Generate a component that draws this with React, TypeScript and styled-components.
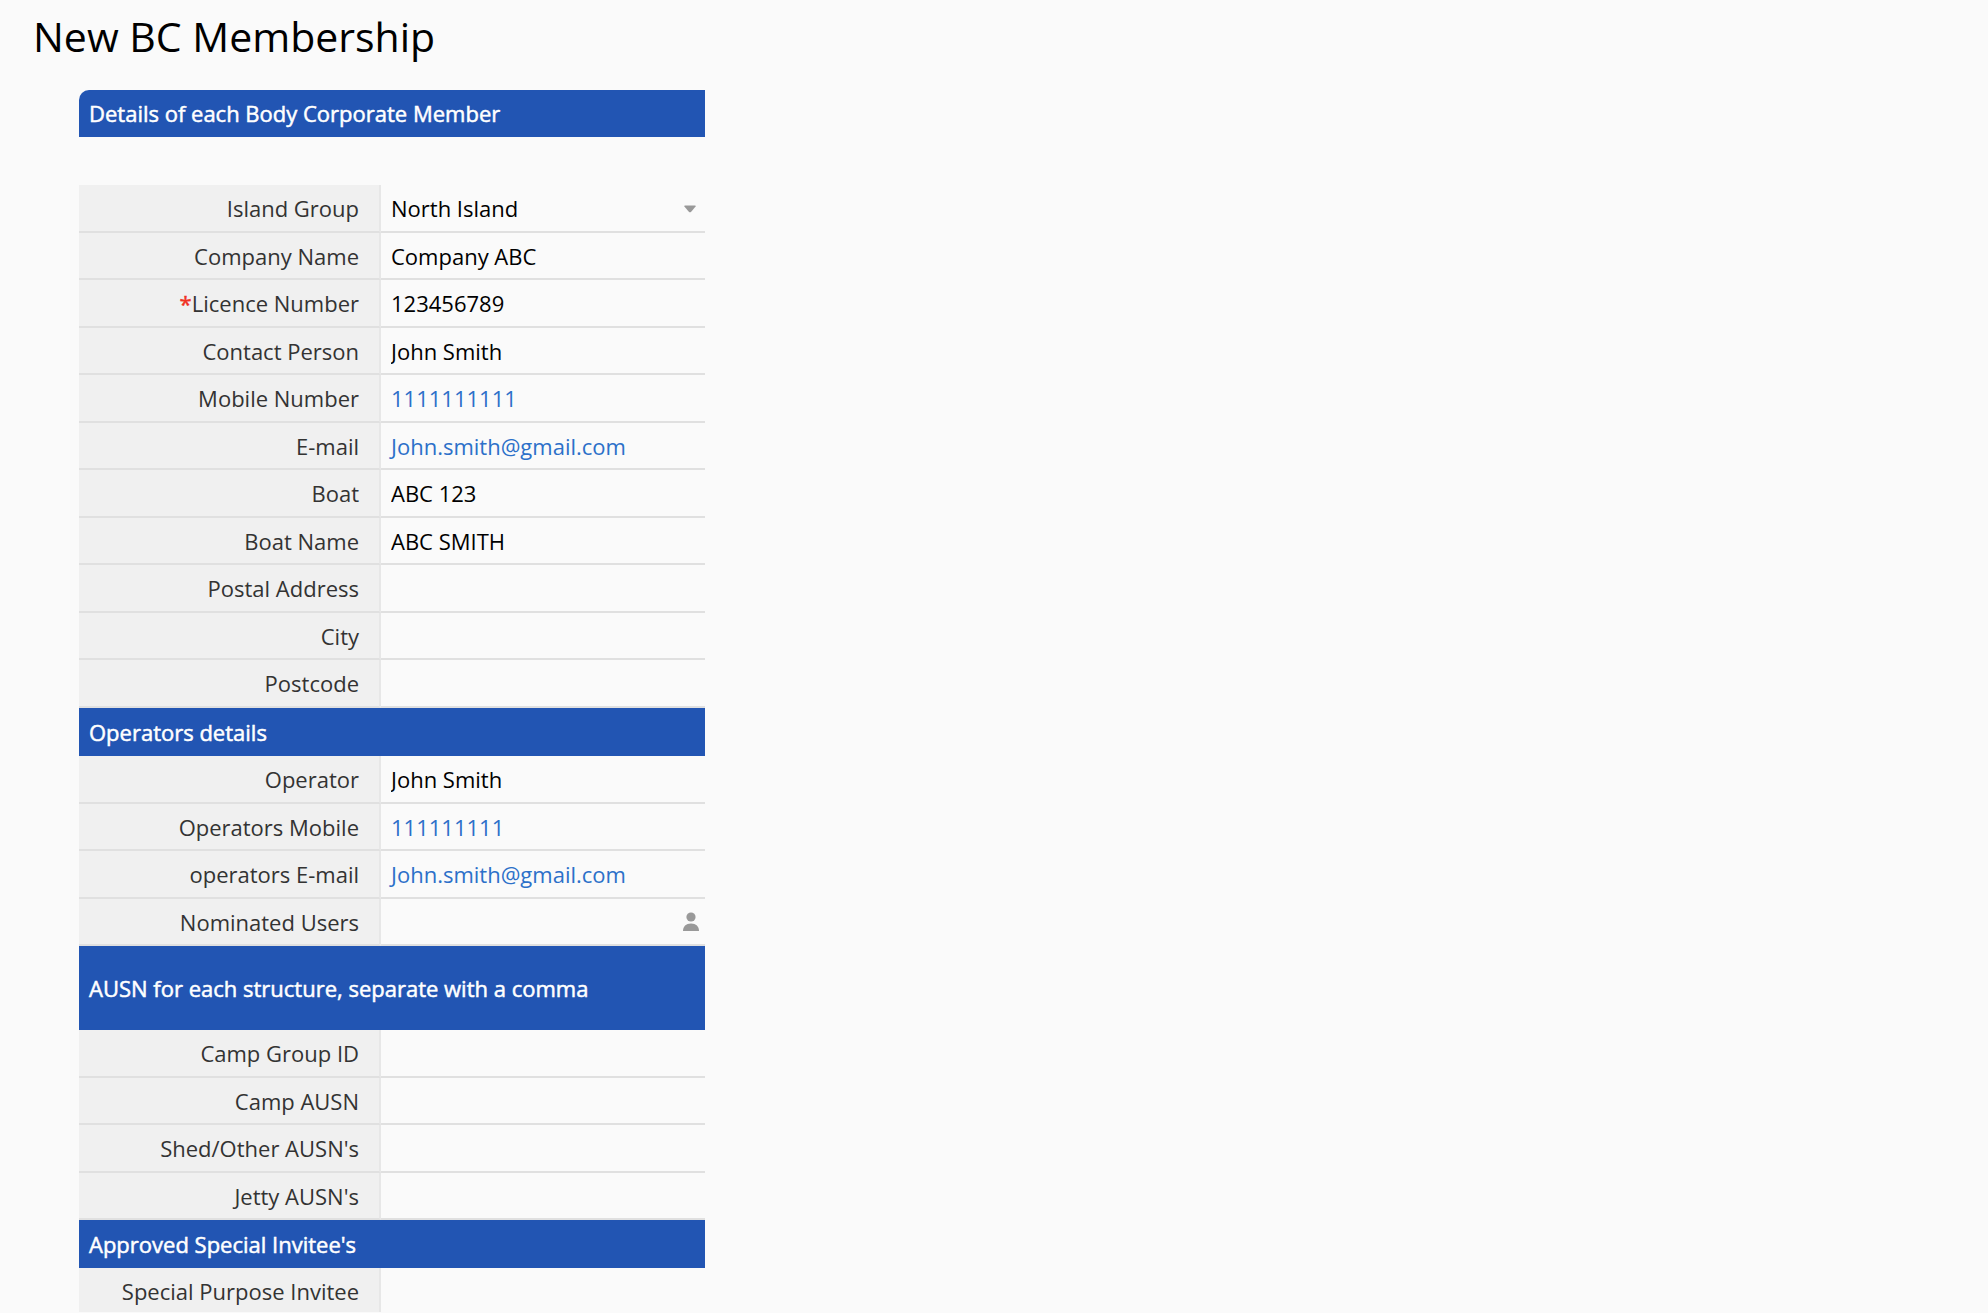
import React from "react";
import styled, { createGlobalStyle } from "styled-components";

const GlobalStyle = createGlobalStyle`
  * {
    box-sizing: border-box;
  }
  html, body {
    height: 100%;
  }
  body {
    margin: 0;
    overflow: hidden;
    background: #ffffff;
    color: #000000;
    font-family: "Open Sans", "Noto Sans", sans-serif;
    font-size: 22px;
    line-height: 30px;
  }
  #root {
    height: 100%;
  }
`;

const Page = styled.main`
  height: calc(100% - 3px);
  padding: 0 33px 1px;
  background: #fafafa;
`;

const Viewport = styled.div`
  display: flex;
  flex-direction: column;
  height: 100%;
  overflow: hidden;
`;

const Title = styled.h1`
  flex: none;
  margin: 0;
  padding: 8px 0 26px;
  font-size: 41px;
  font-weight: 400;
  line-height: 56px;
`;

const Form = styled.form`
  flex: none;
  width: 100%;
  max-width: 672px;
  padding-left: 46px;
`;

const Section = styled.section`
  display: block;
`;

const SectionTitle = styled.h2<{ $first?: boolean; $tall?: boolean }>`
  display: flex;
  align-items: center;
  height: ${(p) => (p.$tall ? 84 : p.$first ? 47 : 48)}px;
  margin: 0 0 ${(p) => (p.$first ? 48 : 0)}px;
  padding: 0 10px ${(p) => (p.$first ? 1 : 0)}px;
  border-top-left-radius: ${(p) => (p.$first ? 10 : 0)}px;
  background: #2255b3;
  color: #ffffff;
  font-size: 22px;
  font-weight: 400;
  line-height: 30px;
  -webkit-text-stroke: 0.5px currentColor;
`;

const Row = styled.div`
  display: grid;
  grid-template-columns: 302px 1fr;
  height: 48px;

  &:nth-child(even) {
    height: 47px;
  }
`;

const LabelCell = styled.div`
  display: flex;
  align-items: center;
  justify-content: flex-end;
  padding-right: 20px;
  border-right: 2px solid #e7e7e7;
  border-bottom: 2px solid #e0e0e0;
  background: #f0f0f0;
  color: #333333;
`;

const Required = styled.span`
  color: #f03224;
  -webkit-text-stroke: 0.5px currentColor;
`;

const ValueCell = styled.div`
  display: flex;
  align-items: center;
  min-width: 0;
  padding: 0 5px 0 10px;
  border-bottom: 2px solid #e0e0e0;
`;

const TextInput = styled.input`
  flex: 1;
  min-width: 0;
  height: 30px;
  padding: 0;
  border: 0;
  outline: 0;
  background: transparent;
  color: inherit;
  font: inherit;
`;

const Select = styled.select`
  flex: 1;
  min-width: 0;
  height: 30px;
  padding: 0;
  border: 0;
  outline: 0;
  appearance: none;
  background: transparent;
  color: inherit;
  font: inherit;
`;

const ValueLink = styled.a`
  color: #2c70c9;
  text-decoration: none;
`;

const PickerButton = styled.button`
  display: flex;
  padding: 0;
  border: 0;
  background: none;
  color: #999999;
`;

const Arrow = styled.svg`
  flex: none;
  margin-right: 4px;
  color: #999999;
  pointer-events: none;
`;

const PersonIcon = () => (
  <svg width="18" height="20" viewBox="0 0 18 20" fill="currentColor" aria-hidden="true">
    <circle cx="9" cy="5" r="4.6" />
    <path d="M1 19C.9 14.500 4 11.400 9 11.400s8.100 3.100 8 7.600z" />
  </svg>
);

type Kind = "text" | "select" | "tel" | "email" | "user";

interface Field {
  label: string;
  value?: string;
  kind?: Kind;
  required?: boolean;
}

interface Group {
  title: string;
  tall?: boolean;
  fields: Field[];
}

const groups: Group[] = [
  {
    title: "Details of each Body Corporate Member",
    fields: [
      { label: "Island Group", value: "North Island", kind: "select" },
      { label: "Company Name", value: "Company ABC" },
      { label: "Licence Number", value: "123456789", required: true },
      { label: "Contact Person", value: "John Smith" },
      { label: "Mobile Number", value: "1111111111", kind: "tel" },
      { label: "E-mail", value: "John.smith@gmail.com", kind: "email" },
      { label: "Boat", value: "ABC 123" },
      { label: "Boat Name", value: "ABC SMITH" },
      { label: "Postal Address" },
      { label: "City" },
      { label: "Postcode" },
    ],
  },
  {
    title: "Operators details",
    fields: [
      { label: "Operator", value: "John Smith" },
      { label: "Operators Mobile", value: "111111111", kind: "tel" },
      { label: "operators E-mail", value: "John.smith@gmail.com", kind: "email" },
      { label: "Nominated Users", kind: "user" },
    ],
  },
  {
    title: "AUSN for each structure, separate with a comma",
    tall: true,
    fields: [
      { label: "Camp Group ID" },
      { label: "Camp AUSN" },
      { label: "Shed/Other AUSN's" },
      { label: "Jetty AUSN's" },
    ],
  },
  {
    title: "Approved Special Invitee's",
    fields: [{ label: "Special Purpose Invitee" }],
  },
];

function Value({ field, id }: { field: Field; id: string }) {
  const { kind = "text", value = "" } = field;
  if (kind === "tel" || kind === "email") {
    const scheme = kind === "tel" ? "tel:" : "mailto:";
    return (
      <ValueLink id={id} href={scheme + value} aria-describedby={`${id}-label`}>
        {value}
      </ValueLink>
    );
  }
  if (kind === "select") {
    return (
      <>
        <Select id={id} defaultValue={value}>
          <option>{value}</option>
        </Select>
        <Arrow width="12" height="10" viewBox="0 -2 12 10" aria-hidden="true">
          <path d="M1 .5h10q1 0 .6 1L7.200 6.700q-1.200 1.200-2.400 0L.4 1.500Q0 .5 1 .5z" fill="currentColor" />
        </Arrow>
      </>
    );
  }
  return (
    <>
      <TextInput id={id} defaultValue={value} required={field.required} />
      {kind === "user" && (
        <PickerButton type="button" aria-label="Choose users">
          <PersonIcon />
        </PickerButton>
      )}
    </>
  );
}

export default function App() {
  return (
    <Page>
      <GlobalStyle />
      <Viewport>
        <Title>New BC Membership</Title>
        <Form>
          {groups.map((group, g) => (
            <Section key={group.title}>
              <SectionTitle $first={g === 0} $tall={group.tall}>
                {group.title}
              </SectionTitle>
              <div>
                {group.fields.map((field, f) => {
                  const id = `field-${g}-${f}`;
                  return (
                    <Row key={id}>
                      <LabelCell>
                        {field.required && <Required>*</Required>}
                        <label id={`${id}-label`} htmlFor={id}>
                          {field.label}
                        </label>
                      </LabelCell>
                      <ValueCell>
                        <Value field={field} id={id} />
                      </ValueCell>
                    </Row>
                  );
                })}
              </div>
            </Section>
          ))}
        </Form>
      </Viewport>
    </Page>
  );
}
